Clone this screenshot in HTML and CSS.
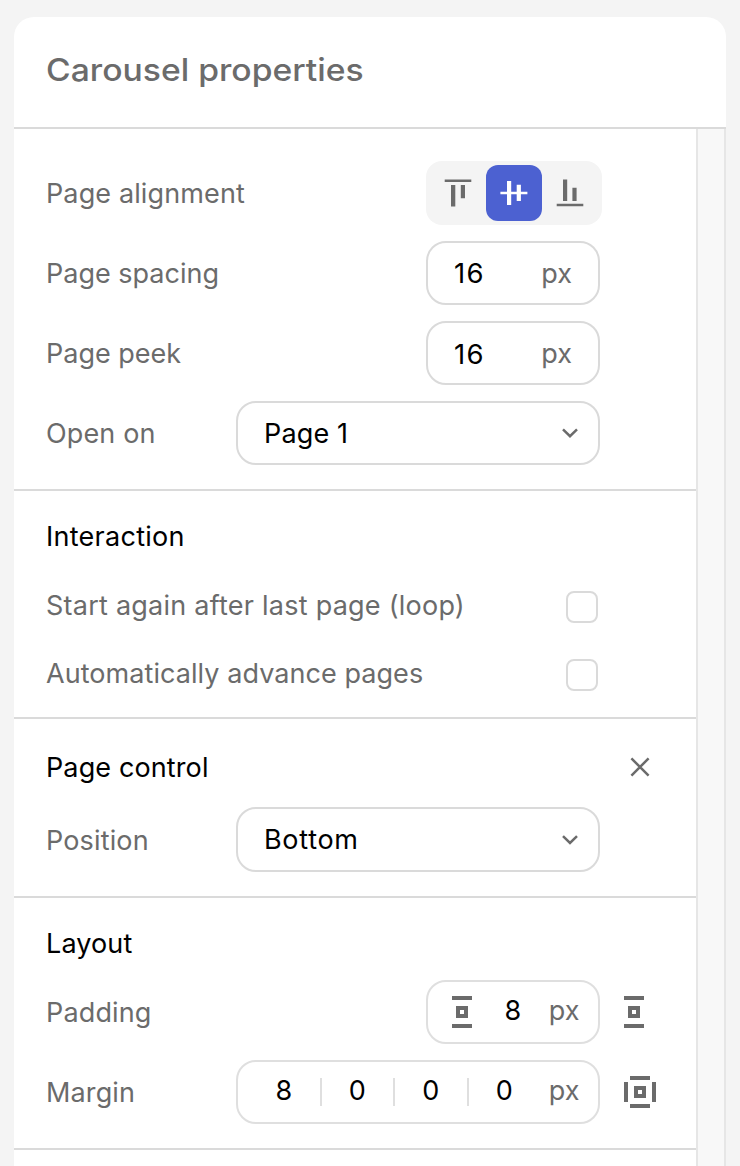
FILE: index.html
```html
<!DOCTYPE html>
<html lang="en">
<head>
<meta charset="utf-8">
<title>Carousel properties</title>
<link rel="stylesheet" href="styles.css">
</head>
<body>
<main class="panel">
  <header class="panel-header"><h1 class="title">Carousel properties</h1></header>
  <div class="panel-body">
    <div class="content">
      <section class="section section-pages">
        <div class="row">
          <span class="label t-align">Page alignment</span>
          <div class="segmented">
            <button class="segment" aria-label="Top"><svg width="56" height="56" fill="currentColor"><path d="M14.7 14.4h26.6v2.6H14.7zM21 20h4.3v21.5H21zM30.8 20H35v13.3h-4.2z"/></svg></button>
            <button class="segment active" aria-label="Middle"><svg width="56" height="56" fill="currentColor"><path d="M14.4 26.7h27v2.6h-27zM21 16h4.2v24H21zM30.7 19.8h4.2v16.3h-4.2z"/></svg></button>
            <button class="segment" aria-label="Bottom"><svg width="56" height="56" fill="currentColor"><path d="M14.7 38.7h26.6v2.6H14.7zM21 14.5h4.2V36H21zM30.4 22.7h4.2V36h-4.2z"/></svg></button>
          </div>
        </div>
        <div class="row">
          <span class="label">Page spacing</span>
          <div class="field number"><span class="value">16</span><span class="unit">px</span></div>
        </div>
        <div class="row">
          <span class="label">Page peek</span>
          <div class="field number lowered"><span class="value">16</span><span class="unit">px</span></div>
        </div>
        <div class="row">
          <span class="label t-open">Open on</span>
          <div class="field select"><span class="option t-page1">Page 1</span><svg class="chevron" width="18" height="12" viewBox="0 0 18 12"><path d="M2 2.4 9 9.2l7-6.8"/></svg></div>
        </div>
      </section>

      <section class="section section-interaction">
        <h2 class="heading t-interaction">Interaction</h2>
        <div class="check-row"><span class="label t-loop">Start again after last page (loop)</span><span class="checkbox"></span></div>
        <div class="check-row"><span class="label t-auto">Automatically advance pages</span><span class="checkbox"></span></div>
      </section>

      <section class="section section-control">
        <div class="heading-row">
          <h2 class="heading t-control">Page control</h2>
          <svg class="close" width="20" height="20" viewBox="0 0 20 20"><path d="m1.4 1.4 17.2 17.2M18.6 1.4 1.4 18.6"/></svg>
        </div>
        <div class="row">
          <span class="label t-position">Position</span>
          <div class="field select tall"><span class="option t-bottom">Bottom</span><svg class="chevron" width="18" height="12" viewBox="0 0 18 12"><path d="M2 3.2 9 10l7-6.8"/></svg></div>
        </div>
      </section>

      <section class="section section-layout">
        <h2 class="heading t-layout">Layout</h2>
        <div class="row">
          <span class="label t-padding">Padding</span>
          <div class="field padding-field">
            <svg class="box-icon" width="20" height="32"><path d="M0 0h20v4H0zM0 28h20v4H0zM4 10h12v12H4zm4 4v4h4v-4z"/></svg>
            <span class="digit">8</span><span class="unit">px</span>
          </div>
          <div class="side"><svg class="box-icon" width="20" height="32"><path d="M0 0h20v4H0zM0 28h20v4H0zM4 10h12v12H4zm4 4v4h4v-4z"/></svg></div>
        </div>
        <div class="row">
          <span class="label t-margin">Margin</span>
          <div class="field margin-field">
            <span class="cell">8</span><span class="cell">0</span><span class="cell">0</span><span class="cell">0</span>
            <span class="unit">px</span>
          </div>
          <div class="side"><svg class="box-icon" width="32" height="32"><path d="M6 0h20v4H6zM6 28h20v4H6zM0 6h4v20H0zM28 6h4v20h-4zM10 10h12v12H10zm4 4v4h4v-4z"/></svg></div>
        </div>
      </section>
    </div>
    <div class="scrollbar"></div>
  </div>
</main>
</body>
</html>
```
FILE: styles.css
```css
* { box-sizing: border-box; }

body {
  margin: 0;
  height: 1166px;
  padding: 17px 14px 0;
  overflow: hidden;
  background: #f4f4f4;
  color: #000;
  font: 400 27px/32px Inter, sans-serif;
}

.panel {
  display: flex;
  flex-direction: column;
  height: 1149px;
  background: #fff;
  border-radius: 20px 20px 0 0;
  overflow: hidden;
}

.panel-header {
  flex: none;
  height: 112px;
  padding: 33px 32px 0;
  border-bottom: 2px solid #dadada;
}

/* Slightly extended letterforms for the panel title */
.title {
  margin: 0;
  color: #6b6b6b;
  font-size: 31px;
  font-weight: 550;
  line-height: 40px;
  white-space: nowrap;
  transform: scaleX(1.086);
  transform-origin: 0 50%;
}

.panel-body { display: flex; flex: 1; min-height: 0; }
.content { width: 682px; }

.scrollbar {
  width: 30px;
  background: #f8f8f8;
  border: solid #e6e6e6;
  border-width: 0 2px;
}

.section {
  display: flex;
  flex-direction: column;
  border-bottom: 2px solid #dadada;
  padding: 0 96px 0 32px;
}

.section-pages { height: 362px; padding-top: 32px; gap: 16px; }
.section-interaction { height: 228px; padding-top: 30px; }
.section-control { height: 179px; padding-top: 32px; }
.section-layout { height: 252px; padding-top: 30px; gap: 16px; }
.section-interaction .heading { margin-bottom: 20px; }
.section-layout .heading { margin-bottom: 4px; }

.row { display: flex; align-items: center; height: 64px; flex: none; }
.label { flex: 1; color: #6b6b6b; white-space: nowrap; }
.row .label { padding-top: 2px; }

.heading {
  margin: 0;
  font-size: 27px;
  font-weight: 400;
  line-height: 32px;
  white-space: nowrap;
}

.t-align, .t-control, .t-layout, .t-margin { letter-spacing: 0.12px; }
.t-open, .t-page1, .t-padding, .t-position { letter-spacing: 0.15px; }
.t-interaction { letter-spacing: 0.27px; }
.t-loop { letter-spacing: 0.24px; }
.t-auto { letter-spacing: 0.06px; }
.t-bottom { letter-spacing: 0.7px; }

.segmented {
  display: flex;
  flex: none;
  width: 176px;
  height: 64px;
  margin-right: -2px;
  padding: 4px;
  border-radius: 16px;
  background: #f4f4f4;
}

.segment {
  width: 56px;
  height: 56px;
  padding: 0;
  border: 0;
  border-radius: 12px;
  background: none;
  color: #6b6b6b;
}

.segment svg { display: block; }
.segment.active { background: #4c61d1; color: #fff; }

.field {
  display: flex;
  flex: none;
  align-items: center;
  height: 64px;
  border: 2px solid #dadada;
  border-radius: 20px;
  background: #fff;
}

.number { width: 174px; padding: 0 26px; justify-content: space-between; }
.value { font-size: 27.5px; letter-spacing: 1.3px; }
.lowered .value { padding-top: 2px; }
.number .unit { padding-top: 2px; }
.option { padding-top: 2px; }
.unit { color: #6b6b6b; }

.select { width: 364px; padding: 0 19px 0 26px; justify-content: space-between; }
.select.tall { height: 65px; }

.chevron, .close { fill: none; stroke: #6b6b6b; stroke-width: 2.5; }

.check-row { display: flex; align-items: center; height: 68px; }
.check-row .label { padding-bottom: 2px; }

.checkbox {
  width: 32px;
  height: 32px;
  margin-right: 2px;
  border: 2px solid #dadada;
  border-radius: 8px;
}

.heading-row {
  display: flex;
  align-items: center;
  justify-content: space-between;
  height: 32px;
  margin: 0 -50px 24px 0;
}

.heading-row .heading { padding-top: 2px; }
.section-control .label { padding-top: 4px; }

.box-icon { display: block; fill: #6b6b6b; fill-rule: evenodd; }
.side { width: 96px; margin-right: -96px; padding-left: 24px; }
.padding-field, .margin-field { border-color: #dfdfdf; }
.padding-field { width: 174px; padding: 0 18.5px 0 24px; }
.digit { margin-left: 32.5px; padding-bottom: 2px; }
.padding-field .unit, .margin-field .unit { margin-left: auto; padding-bottom: 2px; }
.margin-field { width: 364px; padding: 0 18.5px 0 10.1px; }

.cell {
  width: 73.5px;
  height: 28px;
  border-right: 2px solid #dfdfdf;
  line-height: 26px;
  text-align: center;
}

.cell:nth-child(4) { border-right-color: transparent; }
```
